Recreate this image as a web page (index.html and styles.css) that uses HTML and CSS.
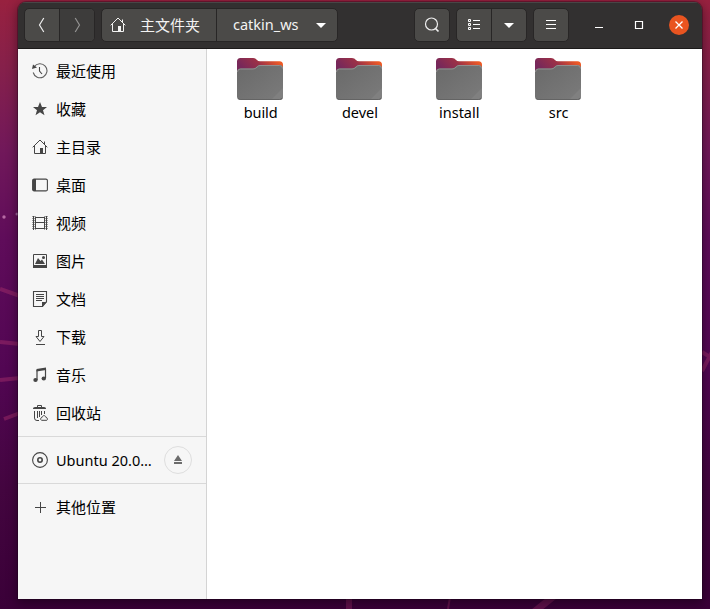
FILE: index.html
```html
<!DOCTYPE html>
<html lang="zh-CN">
<head>
<meta charset="utf-8">
<title>catkin_ws</title>
<link rel="stylesheet" href="styles.css">
</head>
<body>
<svg class="wallpaper" width="710" height="609" viewBox="0 0 710 609">
  <g fill="none" stroke="#9a2a68" stroke-opacity=".55" stroke-width="4">
    <path d="M0 289L20 296M0 342L20 344M0 380L20 378M4 419L20 413M702 352L710 357M702 371L712 352"/>
    <path d="M349 596V609" stroke-width="6" stroke-opacity=".4"/>
    <path d="M450 597L448 609" stroke-width="2" stroke-opacity=".4"/>
    <path d="M554 596L534 612" stroke-width="7" stroke-opacity=".4"/>
  </g>
  <circle cx="4" cy="217" r="1.7" fill="#b76aa4"/><circle cx="17" cy="214" r="1.5" fill="#a0639c"/>
</svg>
<svg class="defs" width="0" height="0">
  <defs>
    <linearGradient id="back" x1="0" y1=".3" x2="1" y2="0"><stop offset="0" stop-color="#77285a"/><stop offset=".4" stop-color="#9a3048"/><stop offset=".85" stop-color="#ee5a25"/></linearGradient>
    <linearGradient id="front" x1="0" y1="0" x2="1" y2="1"><stop offset="0" stop-color="#696969"/><stop offset="1" stop-color="#7b7b7b"/></linearGradient>
    <symbol id="folder" viewBox="0 0 46 42">
      <path d="M0 14V3.5Q0 0 3.500 0H16Q18.500 0 20 2Q21 3.200 23 3.200H42.500Q46 3.200 46 6.700V14Z" fill="url(#back)"/>
      <path d="M0 14Q0 10.500 3.500 10.500H16Q18 10.500 19.500 8.700Q21 7 23 7H42.500Q46 7 46 10.500V38.500Q46 42 42.500 42H3.500Q0 42 0 38.500Z" fill="url(#front)"/>
      <path d="M.5 14Q.5 11 3.500 11H16Q18.500 11 20 9.200Q21.300 7.500 23 7.500H42.500Q45.500 7.500 45.500 10.500" fill="none" stroke="#909090"/>
      <path d="M46 30V38.500Q46 42 42.500 42H34Z" fill="#808080"/>
      <path d="M1 40Q2 41.500 3.500 41.500H42.500Q44 41.500 45 40" fill="none" stroke="#646464"/>
    </symbol>
    <symbol id="home" viewBox="0 0 16 16">
      <path d="M.7 8.300L8 1L15.300 8.300M2.500 7V14.500H13.500V7M12.500 5V2.500" fill="none" stroke="currentColor"/><path d="M8 9h3v6H8z" fill="currentColor"/>
    </symbol>
  </defs>
</svg>
<main class="window">
  <header class="titlebar">
    <div class="group nav">
      <button class="btn"><svg width="16" height="16"><path d="M9.800 1L5.500 8L9.800 15" fill="none" stroke="#eee" stroke-width="1.200"/></svg></button>
      <button class="btn disabled"><svg width="16" height="16"><path d="M6.200 1L10.500 8L6.200 15" fill="none" stroke="#929190" stroke-width="1.200"/></svg></button>
    </div>
    <div class="group path">
      <button class="btn crumb"><svg width="16" height="16"><use href="#home"/></svg><span>主文件夹</span></button>
      <button class="btn current"><span>catkin_ws</span><svg width="10" height="5"><path d="M0 0H10L5 5Z" fill="#fff"/></svg></button>
    </div>
    <div class="group search"><button class="btn"><svg width="16" height="16"><circle cx="7.500" cy="7" r="6" fill="none" stroke="#eee" stroke-width="1.200"/><path d="M11.500 11.500L14.500 14.500" stroke="#eee" stroke-width="1.700"/></svg></button></div>
    <div class="group views">
      <button class="btn"><svg width="16" height="16"><path d="M2.500 2.500h2v2h-2zM2.500 6.500h2v2h-2zM2.500 10.500h2v2h-2zM7 3.500h7M7 7.500h7M7 11.500h7" fill="none" stroke="#fff"/></svg></button>
      <button class="btn"><svg width="10" height="5"><path d="M0 0H10L5 5Z" fill="#fff"/></svg></button>
    </div>
    <div class="group menu"><button class="btn"><svg width="16" height="16"><path d="M3 3.500h10M3 7.500h10M3 11.500h10" stroke="#fff"/></svg></button></div>
    <div class="controls">
      <button><svg width="20" height="20"><path d="M6 12.500h8" stroke="#fff"/></svg></button>
      <button><svg width="20" height="20"><path d="M6.500 6.500h7v7h-7z" fill="none" stroke="#fff" stroke-width="1.200"/></svg></button>
      <button class="close"><svg width="20" height="20"><path d="M6.500 6.500L13.500 13.500M13.500 6.500L6.500 13.500" stroke="#fff" stroke-width="1.300"/></svg></button>
    </div>
  </header>
  <div class="content">
    <nav class="sidebar">
      <ul class="places">
        <li><svg width="16" height="16" fill="none" stroke="currentColor"><path d="M2.200 3.800A7 7 0 1 1 1.200 9.500" stroke-width="1.100" stroke-opacity=".85"/><path d="M7.500 4V8L10 11" stroke-width="1.100"/><path d="M0 6L1 1.500L5 4.500Z" fill="currentColor" stroke="none"/></svg>最近使用</li>
        <li><svg width="16" height="16"><path d="M8 1l2 5h5l-4 3.200 1.500 5L8 11.300l-4.500 2.900L5 9.200 1 6h5z" fill="currentColor"/></svg>收藏</li>
        <li><svg width="16" height="16"><use href="#home"/></svg>主目录</li>
        <li><svg width="16" height="16"><rect x=".6" y="2.100" width="14.800" height="11.800" rx="1.500" fill="none" stroke="currentColor" stroke-width="1.100"/><path d="M1 2h3v12H1z" fill="currentColor"/></svg>桌面</li>
        <li><svg width="16" height="16"><path d="M3.500 1.500v13M12.500 1.500v13M3 2.500h10M3 7.500h10M3 13.500h10" fill="none" stroke="currentColor"/><path d="M1.500 1v14M14.500 1v14" stroke="currentColor" stroke-width="2" stroke-dasharray="1 1"/><path d="M1.500 1v14M14.500 1v14" stroke="currentColor"/></svg>视频</li>
        <li><svg width="16" height="16"><path d="M1.500 1.500h13v12h-13z" fill="none" stroke="currentColor"/><path d="M1 12h14v3H1zM3 11l3-6 2.500 3 1.500-1.500 3 4.500z" fill="currentColor"/><circle cx="11.500" cy="4.500" r="1.500" fill="currentColor"/></svg>图片</li>
        <li><svg width="16" height="16"><path d="M1.500 .5h13v10l-4 5h-9z" fill="none" stroke="currentColor" stroke-width="1.100"/><path d="M4 3.500h8M4 5.500h8M4 7.500h8M4 9.500h6" stroke="currentColor"/><path d="M10 11h5l-5 5z" fill="currentColor"/></svg>文档</li>
        <li><svg width="16" height="16"><path d="M6.500 1.500h3V7.500H12L8 12.500L4 7.500H6.500ZM4 15.500h9" fill="none" stroke="currentColor"/></svg>下载</li>
        <li><svg width="16" height="16"><path d="M5 3V13M13.500 2V11" stroke="currentColor" stroke-width="1.200"/><path d="M4.500 2L14 .5V3L4.500 4.500z" fill="currentColor"/><ellipse cx="3.500" cy="13" rx="2.200" ry="1.900" fill="currentColor"/><ellipse cx="11.800" cy="11.500" rx="2.200" ry="1.900" fill="currentColor"/></svg>音乐</li>
        <li><svg width="16" height="16"><path d="M1 3.500Q1 2 3 2H12Q14 2 14 3.500V4H1z" fill="currentColor"/><path d="M5.500 2V.5h4V2M2.500 6v7q0 2.500 2.500 2.500h2M12.500 6v3M5.500 6v7M7.500 6v6M9.500 6v4" fill="none" stroke="currentColor"/><path d="M9.500 15.300C8 14.500 8.500 12.500 10 12.500C10.500 10 13.500 10 14 12.500C15.500 12.500 16 14.500 14.800 15.300Z" fill="none" stroke="currentColor"/></svg>回收站</li>
      </ul>
      <div class="place device"><svg width="16" height="16" fill="none" stroke="currentColor"><circle cx="8" cy="8" r="7.400" stroke-width="1.100"/><circle cx="8" cy="8" r="2.200" stroke-width="1.600"/></svg><span class="latin">Ubuntu 20.0…</span><button class="eject"><svg width="10" height="10"><path d="M5 0L9 6H1ZM1 7h8v2H1z" fill="#6c6c6c"/></svg></button></div>
      <div class="place other"><svg width="16" height="16"><path d="M3 8.500h11M8.500 3v11" stroke="currentColor"/></svg>其他位置</div>
    </nav>
    <section class="files">
      <div class="file"><svg width="46" height="42"><use href="#folder"/></svg><span class="build">build</span></div>
      <div class="file"><svg width="46" height="42"><use href="#folder"/></svg><span>devel</span></div>
      <div class="file"><svg width="46" height="42"><use href="#folder"/></svg><span>install</span></div>
      <div class="file"><svg width="46" height="42"><use href="#folder"/></svg><span>src</span></div>
    </section>
  </div>
</main>
</body>
</html>
```
FILE: styles.css
```css
* { box-sizing: border-box; }
body {
  margin: 0;
  width: 710px;
  height: 609px;
  overflow: hidden;
  padding: 2px 8px 10px 18px;
  background: linear-gradient(180deg, #98213f 0, #85204b 70px, #71185a 150px, #5f0c5a 240px, #520653 370px, #43053f 490px, #3a0038 609px);
  font: 15px/22px "Noto Sans", "Noto Sans CJK SC", sans-serif;
  color: #000;
}
svg { display: block; flex: none; }
button { border: 0; padding: 0; margin: 0; background: none; font: inherit; color: inherit; }
.wallpaper { position: absolute; left: 0; top: 0; z-index: -1; }
.defs { position: absolute; }
.window {
  height: 597px;
  border-radius: 8px 8px 0 0;
  overflow: hidden;
  display: flex;
  flex-direction: column;
  box-shadow: 0 0 0 1px rgba(20, 0, 20, .3), 0 3px 11px 1px rgba(0, 0, 0, .4);
}
.titlebar {
  height: 47px;
  flex: none;
  display: flex;
  align-items: center;
  padding: 0 13px 0 6px;
  background: #323030;
  border-bottom: 1px solid #1c1a1a;
  box-shadow: inset 0 1px #484646;
  color: #f3f3f2;
}
.group {
  height: 34px;
  display: flex;
  border: 1px solid #282626;
  border-radius: 5px;
  overflow: hidden;
  background: #4b4a48;
}
.btn { flex: 1; display: flex; align-items: center; justify-content: center; }
.btn + .btn { border-left: 1px solid #282626; }
.btn.disabled { background: #3d3c3b; }
.nav { width: 71px; }
.path { width: 237px; margin-left: 6px; }
.crumb { flex: 0 0 114px; gap: 14px; justify-content: flex-start; padding-left: 8px; }
.current { gap: 17px; justify-content: flex-start; padding-left: 16px; }
.current span { width: 66px; font-size: 14.500px; line-height: 20px; padding-bottom: 2px; text-align: left; white-space: nowrap; }
.search { width: 36px; margin-left: 76px; }
.views { width: 71px; margin-left: 6px; }
.menu { width: 36px; margin-left: 6px; }
.controls { display: flex; gap: 20px; margin-left: auto; }
.controls button { width: 20px; height: 20px; }
.controls .close { background: #e95420; border-radius: 50%; }
.content { flex: 1; display: flex; min-height: 0; background: #fff; }
.sidebar { width: 189px; background: #f6f6f6; border-right: 1px solid #d4d4d4; padding-top: 3px; }
.sidebar svg { color: #454545; }
.places { list-style: none; margin: 0; padding: 0 0 4px; }
.places li, .place { height: 38px; display: flex; align-items: center; gap: 8px; padding-left: 14px; }
.place.device { height: 48px; border: solid #d9d9d9; border-width: 1px 0; }
.latin { width: 100px; font-size: 14.500px; padding-bottom: 1px; white-space: nowrap; }
.eject { width: 28px; height: 28px; border: 1px solid #dedede; border-radius: 50%; display: flex; align-items: center; justify-content: center; }
.place.other { height: 46px; }
.files { flex: 1; display: grid; grid-template-columns: repeat(4, 99.300px); align-content: start; padding: 9px 0 0 3.500px; }
.file { display: flex; flex-direction: column; align-items: center; gap: 2px; line-height: 20px; font-size: 14.500px; }
.file span { padding-left: 1px; }
.build { letter-spacing: -.1px; }
```
